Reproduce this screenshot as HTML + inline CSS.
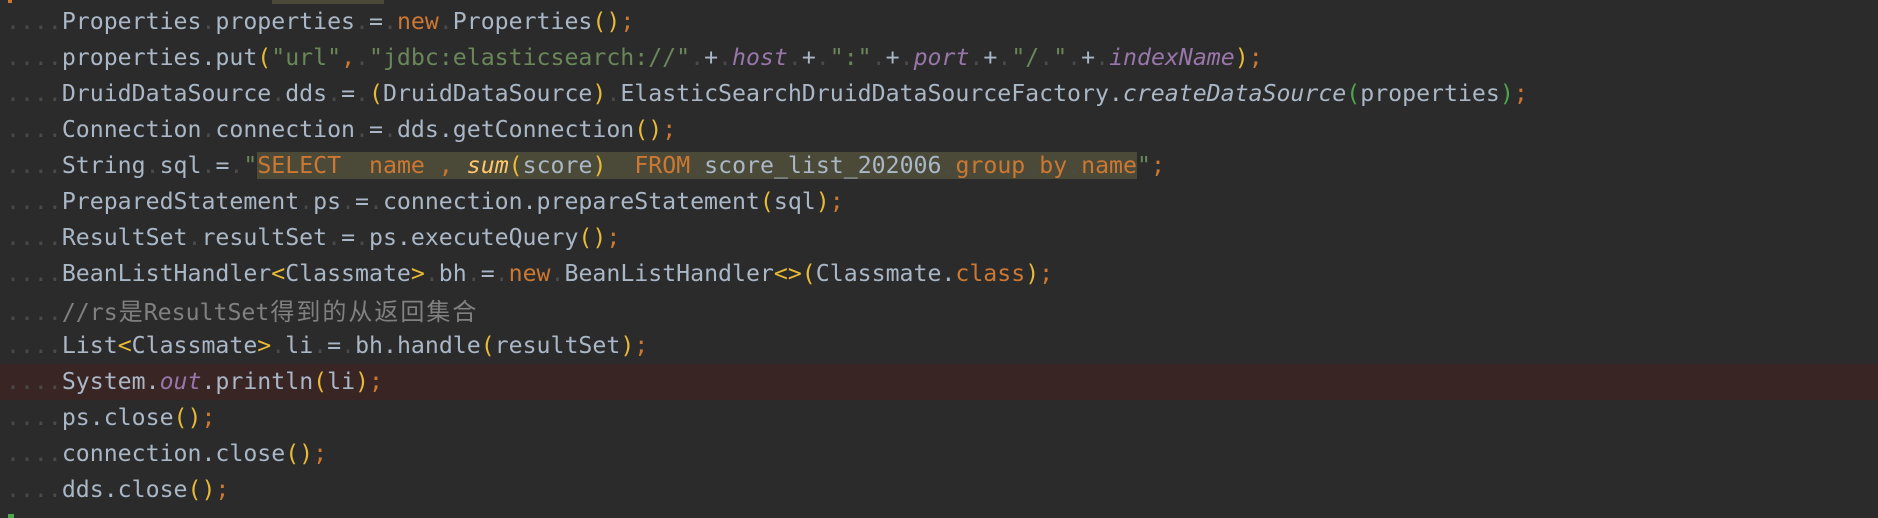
<!DOCTYPE html>
<html><head><meta charset="utf-8"><style>
html,body{margin:0;padding:0;background:#2b2b2b;width:1878px;height:518px;overflow:hidden;position:relative}
.c{position:absolute;left:0;top:4px;width:1878px;font-family:"DejaVu Sans Mono","Liberation Mono",monospace;font-size:23.2px;color:#a9b7c6}
.l{height:36px;line-height:36px;padding-left:6px;white-space:pre}
b{font-weight:normal;color:#4a4a4a}
.k{color:#cc7832}.s{color:#6a8759}.p{color:#9876aa;font-style:italic}.y{color:#e8ba36}.g{color:#4ca64c}
.it{font-style:italic}.f{color:#ffc66d;font-style:italic}.cm{color:#808080}
.inj{background:#4b4a38}
.hl{background:#3a2525}
.cj{display:inline-block;width:26px;text-align:center;font-family:"Noto Sans CJK SC",sans-serif;font-size:24px;color:#808080;overflow:visible}
</style></head><body>
<div style="position:absolute;left:272px;top:0;width:112px;height:4px;background:#4b4a38"></div>
<div style="position:absolute;left:8px;top:0;width:4px;height:3px;background:#cc7832"></div>
<div style="position:absolute;left:8px;top:514px;width:6px;height:4px;background:#4ca64c"></div>
<div class="c">
<div class="l"><b>....</b>Properties<b>.</b>properties<b>.</b>=<b>.</b><span class="k">new</span><b>.</b>Properties<span class="y">()</span><span class="k">;</span></div>
<div class="l"><b>....</b>properties.put<span class="y">(</span><span class="s">"url"</span><span class="k">,</span><b>.</b><span class="s">"jdbc:elasticsearch://"</span><b>.</b>+<b>.</b><span class="p">host</span><b>.</b>+<b>.</b><span class="s">":"</span><b>.</b>+<b>.</b><span class="p">port</span><b>.</b>+<b>.</b><span class="s">"/</span><b>.</b><span class="s">"</span><b>.</b>+<b>.</b><span class="p">indexName</span><span class="y">)</span><span class="k">;</span></div>
<div class="l"><b>....</b>DruidDataSource<b>.</b>dds<b>.</b>=<b>.</b><span class="y">(</span>DruidDataSource<span class="y">)</span><b>.</b>ElasticSearchDruidDataSourceFactory.<span class="it">createDataSource</span><span class="g">(</span>properties<span class="g">)</span><span class="k">;</span></div>
<div class="l"><b>....</b>Connection<b>.</b>connection<b>.</b>=<b>.</b>dds.getConnection<span class="y">()</span><span class="k">;</span></div>
<div class="l"><b>....</b>String<b>.</b>sql<b>.</b>=<b>.</b><span class="s">"</span><span class="inj"><span class="k">SELECT</span>  <span class="k">name</span> <span class="k">,</span> <span class="f">sum</span><span class="y">(</span>score<span class="y">)</span>  <span class="k">FROM</span><b>.</b>score_list_202006<b>.</b><span class="k">group</span><b>.</b><span class="k">by</span><b>.</b><span class="k">name</span></span><span class="s">"</span><span class="k">;</span></div>
<div class="l"><b>....</b>PreparedStatement<b>.</b>ps<b>.</b>=<b>.</b>connection.prepareStatement<span class="y">(</span>sql<span class="y">)</span><span class="k">;</span></div>
<div class="l"><b>....</b>ResultSet<b>.</b>resultSet<b>.</b>=<b>.</b>ps.executeQuery<span class="y">()</span><span class="k">;</span></div>
<div class="l"><b>....</b>BeanListHandler<span class="y">&lt;</span>Classmate<span class="y">&gt;</span><b>.</b>bh<b>.</b>=<b>.</b><span class="k">new</span><b>.</b>BeanListHandler<span class="y">&lt;&gt;(</span>Classmate.<span class="k">class</span><span class="y">)</span><span class="k">;</span></div>
<div class="l"><b>....</b><span class="cm">//rs</span><span class="cj">是</span><span class="cm">ResultSet</span><span class="cj">得</span><span class="cj">到</span><span class="cj">的</span><span class="cj">从</span><span class="cj">返</span><span class="cj">回</span><span class="cj">集</span><span class="cj">合</span></div>
<div class="l"><b>....</b>List<span class="y">&lt;</span>Classmate<span class="y">&gt;</span><b>.</b>li<b>.</b>=<b>.</b>bh.handle<span class="y">(</span>resultSet<span class="y">)</span><span class="k">;</span></div>
<div class="l hl"><b>....</b>System.<span class="p">out</span>.println<span class="y">(</span>li<span class="y">)</span><span class="k">;</span></div>
<div class="l"><b>....</b>ps.close<span class="y">()</span><span class="k">;</span></div>
<div class="l"><b>....</b>connection.close<span class="y">()</span><span class="k">;</span></div>
<div class="l"><b>....</b>dds.close<span class="y">()</span><span class="k">;</span></div>
</div>
</body></html>
